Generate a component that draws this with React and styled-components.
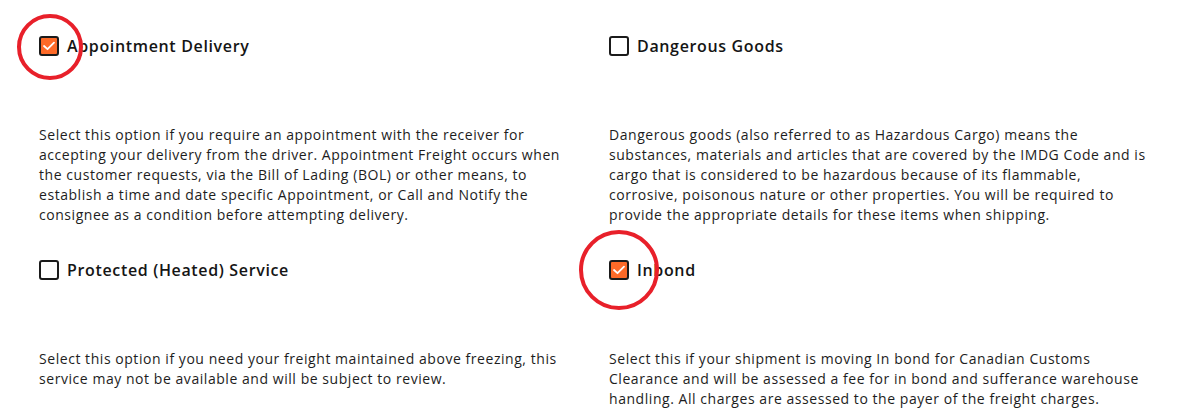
import React from "react";
import styled, { createGlobalStyle } from "styled-components";

const GlobalStyle = createGlobalStyle`
  html, body {
    margin: 0;
    padding: 0;
    background: #ffffff;
  }
  body {
    font-family: "Open Sans", "Liberation Sans", sans-serif;
    color: #1d1d1d;
  }
`;

const Page = styled.div`
  width: 1181px;
  height: 420px;
  overflow: hidden;
  box-sizing: border-box;
  padding: 34px 0 0 39px;
  display: grid;
  grid-template-columns: 540px 540px;
  column-gap: 30px;
  row-gap: 21px;
  align-items: start;
`;

const Option = styled.div`
  display: flex;
  flex-direction: column;
`;

const Header = styled.label`
  display: flex;
  align-items: center;
  gap: 8px;
  height: 24px;
`;

const Box = styled.span`
  position: relative;
  width: 20px;
  height: 20px;
  box-sizing: border-box;
  border: 2px solid #1b1b1b;
  border-radius: 3px;
  background: ${(p) => (p.$checked ? "#fd6a28" : "#ffffff")};
  flex: none;

  svg {
    position: absolute;
    left: -2px;
    top: -2px;
  }
`;

const Ring = styled.span`
  position: absolute;
  left: 50%;
  top: 50%;
  width: ${(p) => p.$size}px;
  height: ${(p) => p.$size}px;
  margin-left: ${(p) => -p.$size / 2 + p.$dx}px;
  margin-top: ${(p) => -p.$size / 2 + p.$dy}px;
  box-sizing: border-box;
  border: 4px solid #e8202a;
  border-radius: 50%;
  pointer-events: none;
`;

const Title = styled.span`
  font-size: 16px;
  font-weight: 600;
  color: #151515;
  letter-spacing: 0.65px;
`;

const Description = styled.p`
  margin: 67px 0 0;
  font-size: 14px;
  line-height: 20px;
  color: #1d1d1d;
  letter-spacing: 0.55px;
`;

const Line = styled.span`
  display: block;
  white-space: nowrap;
`;

const Check = () => (
  <svg width="20" height="20" viewBox="0 0 20 20">
    <polyline
      points="5,10 8.5,13.2 15,6.6"
      fill="none"
      stroke="#ffffff"
      strokeWidth="1.8"
      strokeLinecap="round"
      strokeLinejoin="round"
    />
  </svg>
);

const options = [
  {
    title: "Appointment Delivery",
    checked: true,
    ring: { size: 66, dx: 1, dy: 0.5 },
    lines: [
      "Select this option if you require an appointment with the receiver for",
      "accepting your delivery from the driver. Appointment Freight occurs when",
      "the customer requests, via the Bill of Lading (BOL) or other means, to",
      "establish a time and date specific Appointment, or Call and Notify the",
      "consignee as a condition before attempting delivery.",
    ],
  },
  {
    title: "Dangerous Goods",
    checked: false,
    lines: [
      "Dangerous goods (also referred to as Hazardous Cargo) means the",
      "substances, materials and articles that are covered by the IMDG Code and is",
      "cargo that is considered to be hazardous because of its flammable,",
      "corrosive, poisonous nature or other properties. You will be required to",
      "provide the appropriate details for these items when shipping.",
    ],
  },
  {
    title: "Protected (Heated) Service",
    checked: false,
    lines: [
      "Select this option if you need your freight maintained above freezing, this",
      "service may not be available and will be subject to review.",
    ],
  },
  {
    title: "Inbond",
    checked: true,
    ring: { size: 80, dx: 0, dy: 0.5 },
    lines: [
      "Select this if your shipment is moving In bond for Canadian Customs",
      "Clearance and will be assessed a fee for in bond and sufferance warehouse",
      "handling. All charges are assessed to the payer of the freight charges.",
    ],
  },
];

export default function App() {
  return (
    <>
      <GlobalStyle />
      <Page>
        {options.map((o) => (
          <Option key={o.title}>
            <Header>
              <Box $checked={o.checked}>
                {o.checked && <Check />}
                {o.ring && <Ring $size={o.ring.size} $dx={o.ring.dx} $dy={o.ring.dy} />}
              </Box>
              <Title>{o.title}</Title>
            </Header>
            <Description>
              {o.lines.map((l) => (
                <Line key={l}>{l}</Line>
              ))}
            </Description>
          </Option>
        ))}
      </Page>
    </>
  );
}
